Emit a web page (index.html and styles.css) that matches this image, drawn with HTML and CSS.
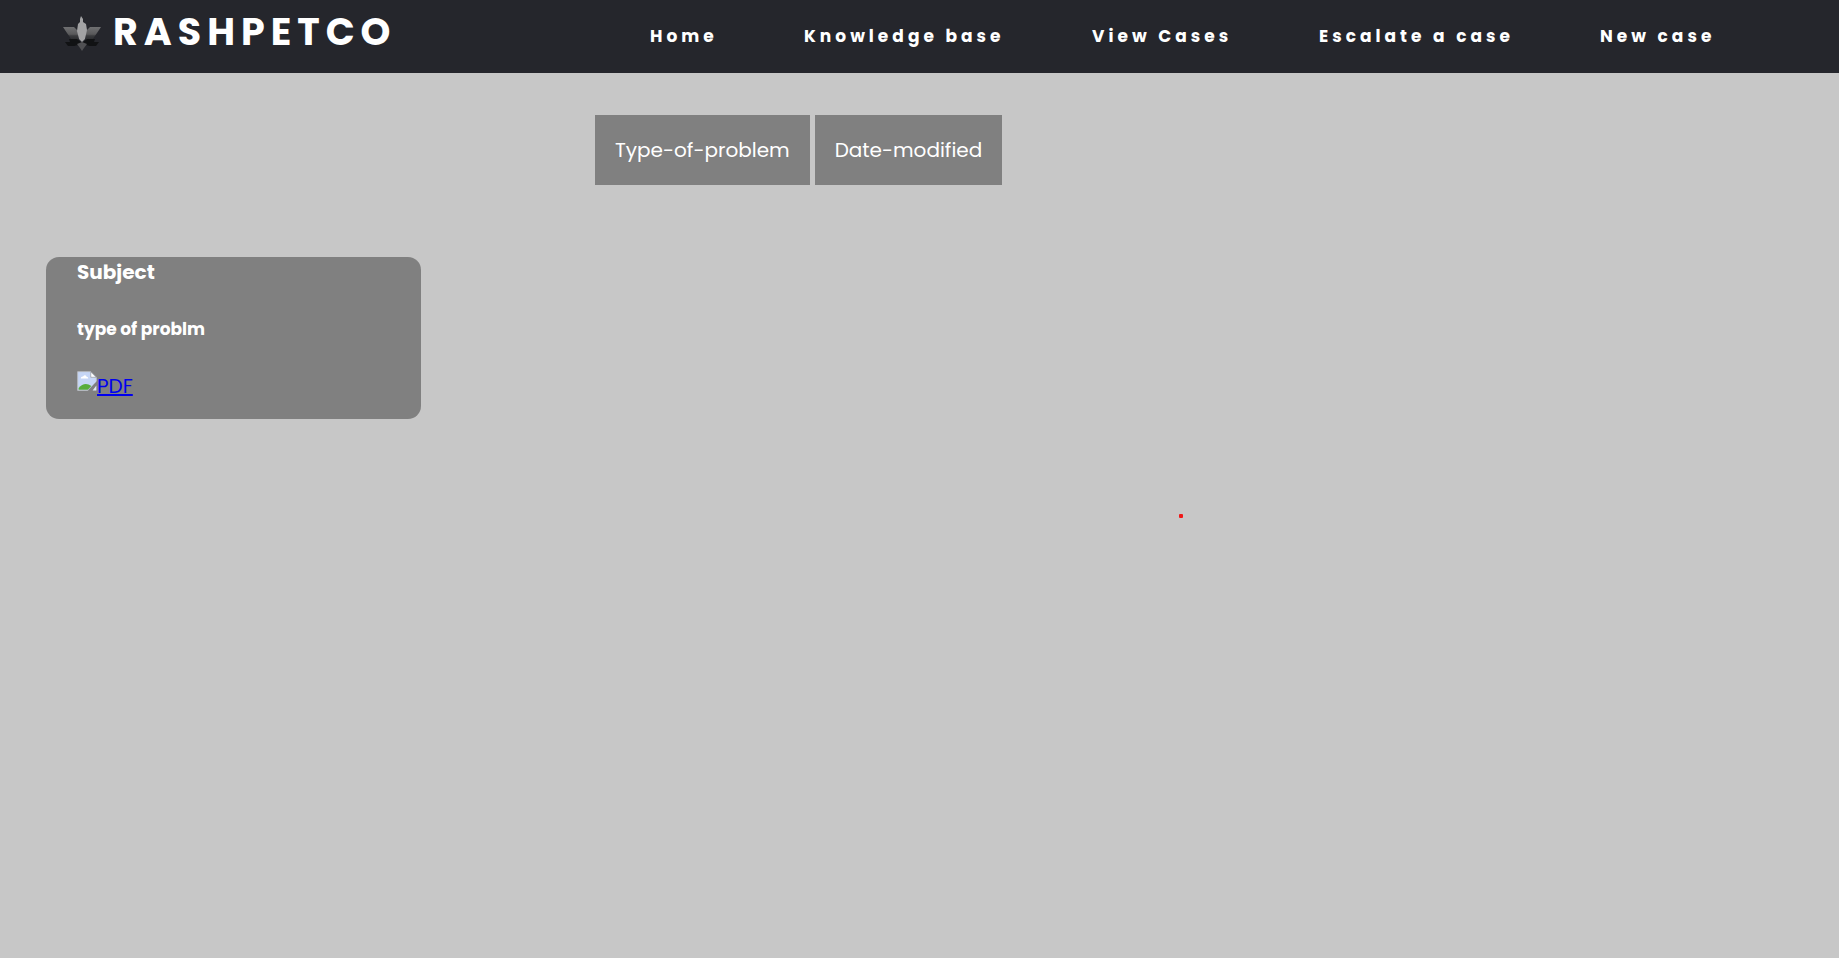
FILE: index.html
```html
<!DOCTYPE html>
<html lang="en">
<head>
<meta charset="utf-8">
<title>Rashpetco</title>
<link rel="stylesheet" href="styles.css">
</head>
<body>
<header class="header">
  <a class="brand" href="#">
    <svg class="brand-icon" viewBox="0 0 38 36" aria-hidden="true">
      <defs>
        <linearGradient id="leaf" gradientUnits="userSpaceOnUse" x1="0" y1="11" x2="0" y2="27">
          <stop offset="0" stop-color="#707072"/><stop offset=".45" stop-color="#59595b"/><stop offset=".55" stop-color="#3a3b3e"/><stop offset="1" stop-color="#1d1e21"/>
        </linearGradient>
      </defs>
      <path fill="url(#leaf)" d="M0 11H11L15 15V27H11L4 17ZM38 11H27L23 15V27H27L34 17Z"/>
      <path fill="#111214" d="M6 23H14L19 27L24 23H32L31 26H36L33 30H27L19 28L11 30H5L2 26H7Z"/>
      <path fill="#505053" d="M14 28L19 26L24 28L21 32L19 35L17 32Z"/>
      <path fill="#a2a2a4" d="M18 0L20 3V6L23 8L24 14L22 23L19 26L16 23L14 15L15 8L17 6V3Z"/>
    </svg>
    <span class="brand-name">RASHPETCO</span>
  </a>
  <nav class="nav">
    <a href="#">Home</a>
    <a href="#">Knowledge base</a>
    <a href="#">View Cases</a>
    <a href="#">Escalate a case</a>
    <a href="#">New case</a>
  </nav>
</header>
<main class="main">
  <div class="filters">
    <button class="filter" type="button">Type-of-problem</button>
    <button class="filter" type="button">Date-modified</button>
  </div>
  <article class="card">
    <h3 class="card-title">Subject</h3>
    <h4 class="card-type">type of problm</h4>
    <a class="card-link" href="#"><svg class="file-icon" viewBox="0 0 16 16" aria-hidden="true">
      <path fill="#c6d6f6" stroke="#b9bcc0" stroke-width=".7" d="M.5.5H11L15.5 5V9L9 15.5H.5Z"/>
      <path fill="#fff" d="M3 6Q3 4.3 4.8 4.4Q6.5 2.5 7.7 4.6Q9 4.6 9 6Z"/>
      <path fill="#58ad3c" d="M1.3 15V13.5Q6 8.2 11.5 12L8.7 15Z"/>
      <path fill="#fff" stroke="#8b8d91" stroke-width=".5" d="M11 .7L15.3 5H11Z"/>
      <path fill="#808080" d="M8.5 15.8L16 8V10L10.5 15.8Z"/>
      <path fill="#dfe8f7" d="M15.5 11.5V15.5H12.5Z"/>
    </svg><span>PDF</span></a>
  </article>
</main>
<div class="marker"></div>
</body>
</html>
```
FILE: styles.css
```css
* { box-sizing: border-box; }
body {
  margin: 0;
  min-height: 100vh;
  background: #c7c7c7;
  color: #fff;
  font-family: Poppins, Inter, sans-serif;
  font-size: 20px;
  line-height: 30px;
}
.header {
  display: grid;
  grid-template-columns: 650fr 1189fr;
  min-height: 73px;
  background: #25262c;
}
.brand {
  display: flex;
  align-items: flex-start;
  gap: 12px;
  padding: 8px 0 0 63px;
  color: #fff;
  text-decoration: none;
}
.brand-icon { width: 38px; height: 36px; margin-top: 8px; }
.brand-name {
  font-size: 38px;
  font-weight: 700;
  line-height: 48px;
  letter-spacing: 6px;
}
.nav {
  display: grid;
  grid-template-columns: 154fr 288fr 227fr 281fr 239fr;
  align-items: center;
  padding-bottom: 2px;
}
.nav a {
  color: #fff;
  font-size: 17px;
  font-weight: 700;
  letter-spacing: 4px;
  text-decoration: none;
  white-space: nowrap;
}
.main { padding: 42px 46px; }
.filters {
  display: flex;
  gap: 5px;
  padding-left: 549px;
}
.filter {
  padding: 20px;
  border: 0;
  background: #808080;
  color: #fff;
  font: inherit;
}
.card {
  width: 375px;
  margin-top: 72px;
  padding: 0 31px 18px;
  border-radius: 13px;
  background: #808080;
}
.card-title { margin: 0; font-size: 20px; }
.card-type { margin: 27px 0; font-size: 17px; }
.card-link {
  display: flex;
  color: #0000ee;
  text-decoration: none;
}
.card-link span { text-decoration: underline; }
.file-icon { width: 20px; height: 20px; }
.marker {
  position: absolute;
  left: 1179px;
  top: 514px;
  width: 4px;
  height: 4px;
  border-radius: 1px;
  background: #f01818;
}
```
